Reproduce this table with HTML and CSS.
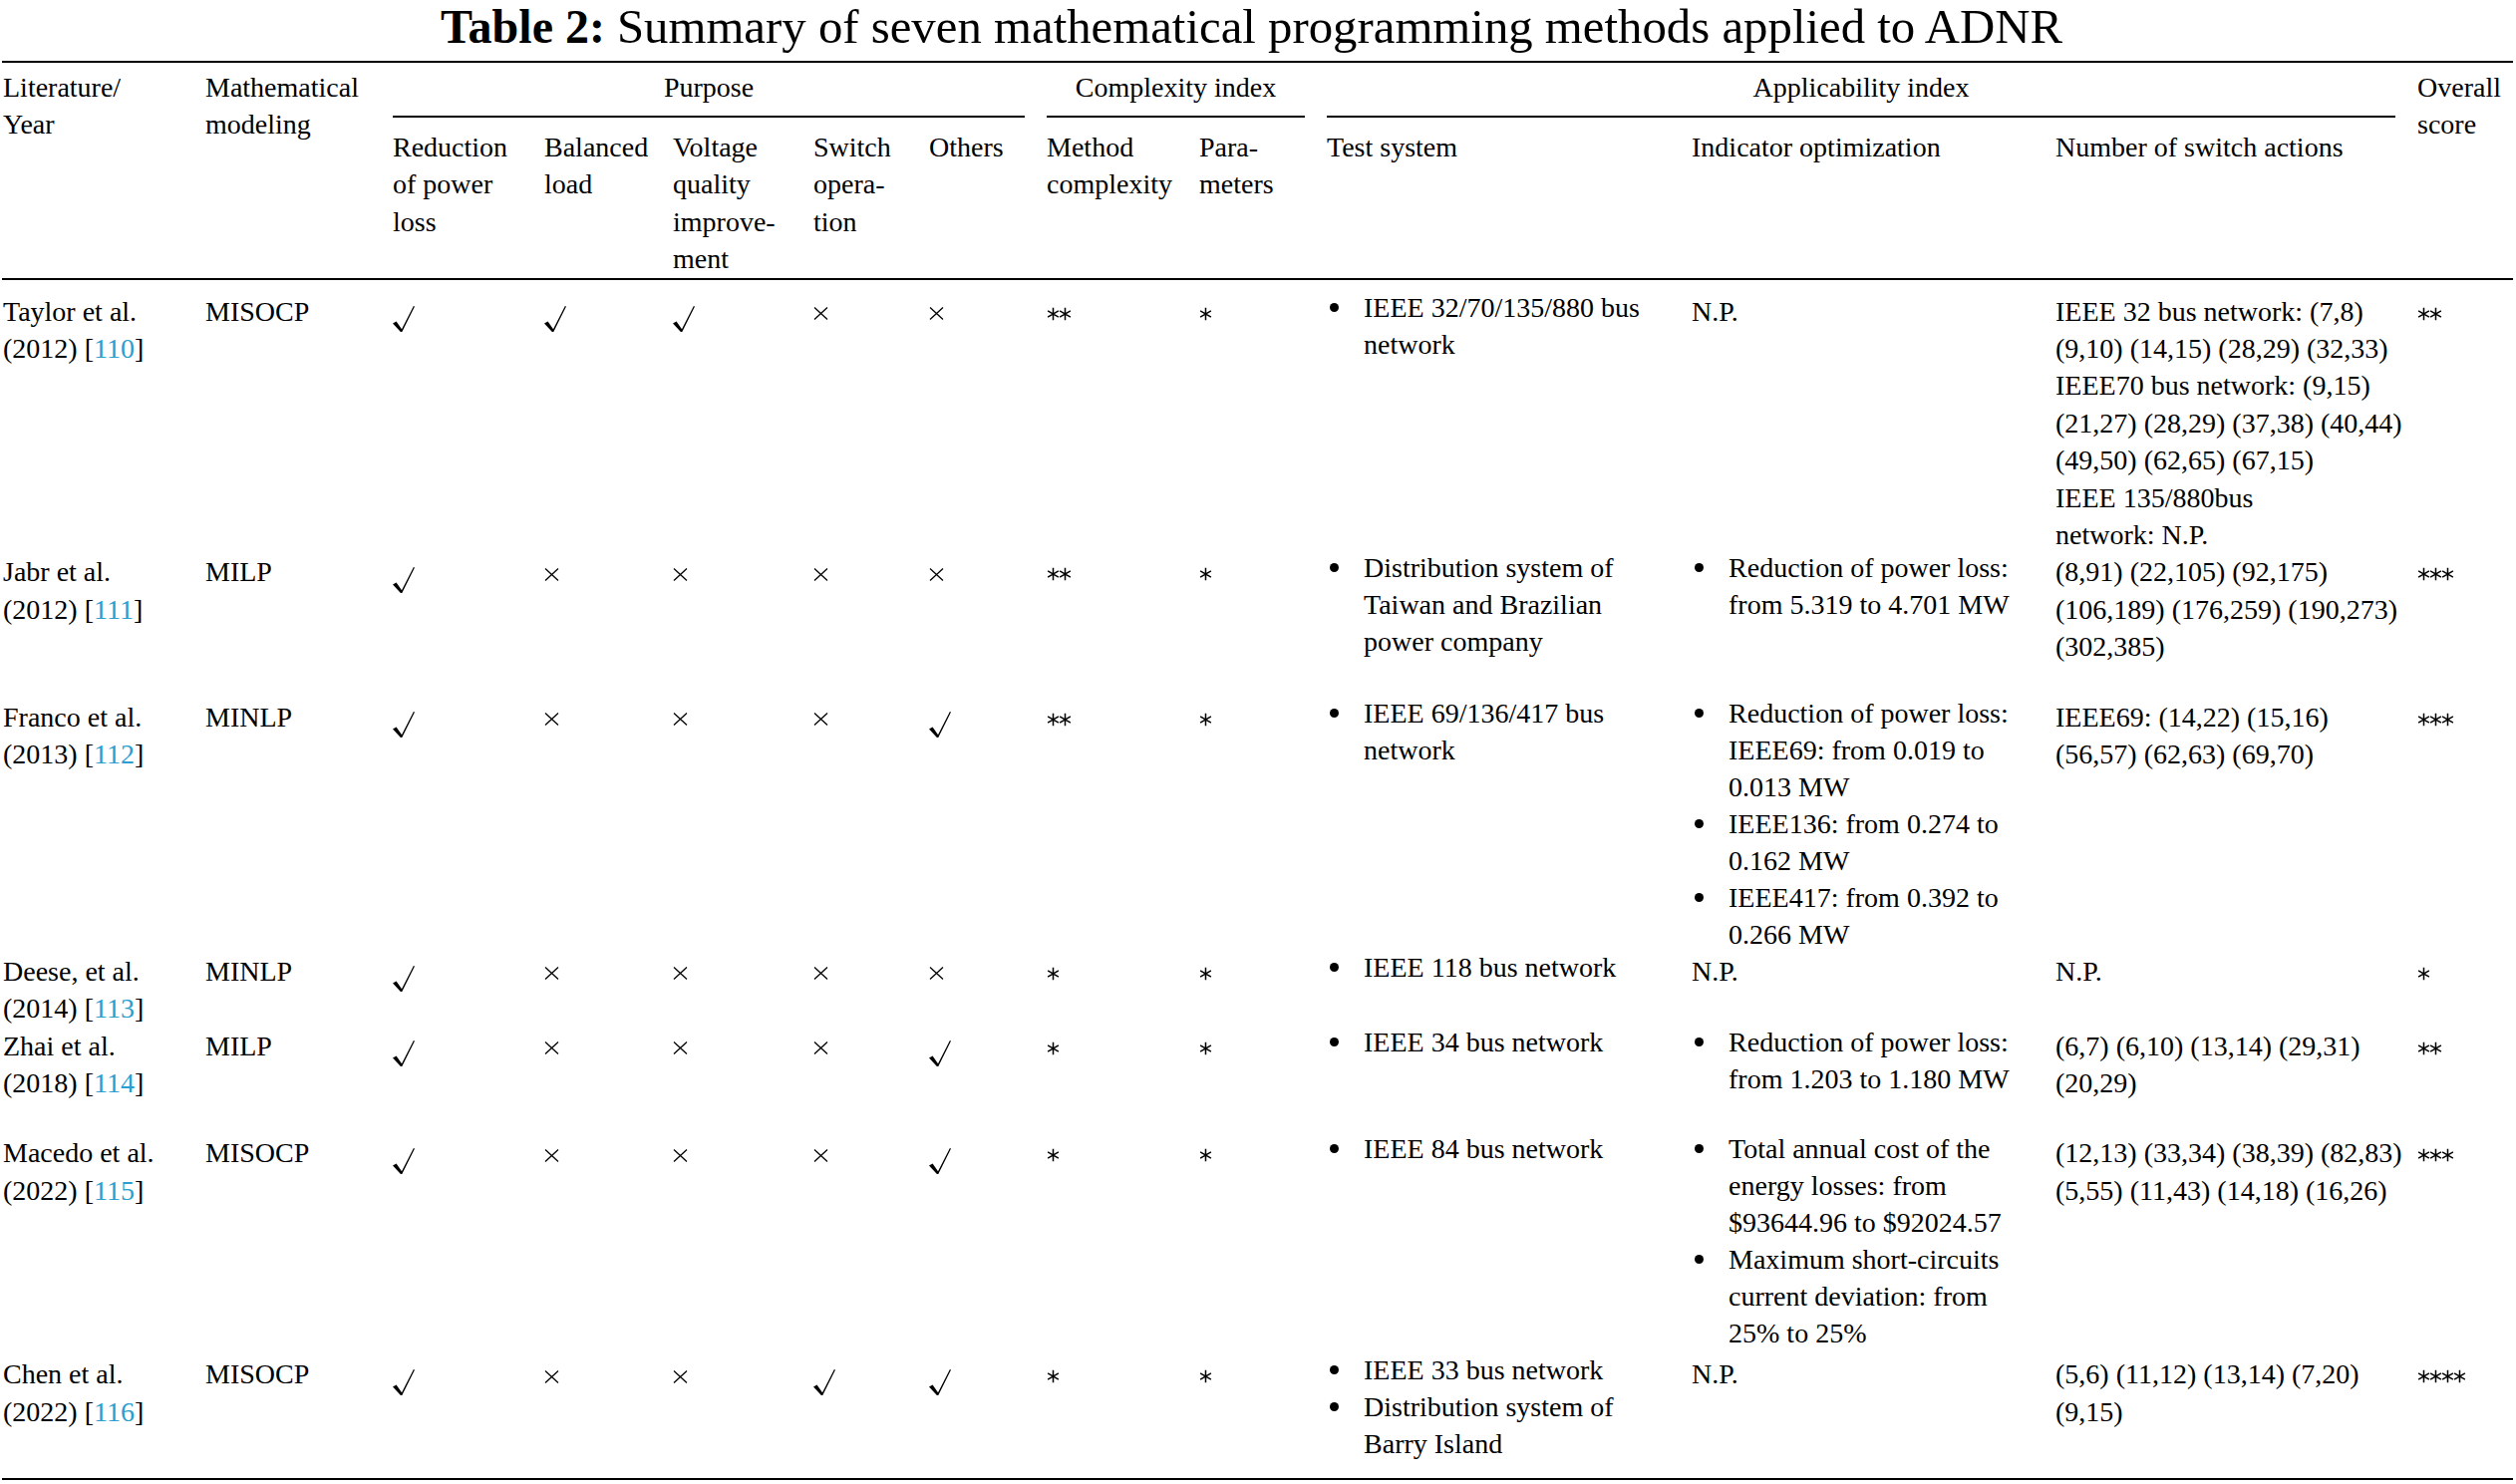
FILE: index.html
```html
<!DOCTYPE html>
<html lang="en">
<head>
<meta charset="utf-8">
<title>Table 2</title>
<link rel="stylesheet" href="styles.css">
</head>
<body>
<div class="page">
  <h1 class="caption"><b>Table 2:</b> <span class="cap-text">Summary of seven mathematical programming methods applied to ADNR</span></h1>
  <div class="tbl-wrap">
  <table class="tbl">
    <colgroup>
      <col class="w1"><col class="w2"><col class="w3"><col class="w4"><col class="w5"><col class="w6"><col class="w7"><col class="w8"><col class="w9"><col class="w10"><col class="w11"><col class="w12"><col class="w13">
    </colgroup>
    <thead>
      <tr class="hr1">
        <th rowspan="2" class="c-first span2">Literature/<br>Year</th>
        <th rowspan="2" class="span2">Mathematical<br>modeling</th>
        <th colspan="5" class="grp"><div class="grp-label">Purpose</div></th>
        <th colspan="2" class="grp"><div class="grp-label">Complexity index</div></th>
        <th colspan="3" class="grp"><div class="grp-label">Applicability index</div></th>
        <th rowspan="2" class="c-last span2">Overall<br>score</th>
      </tr>
      <tr class="hr2">
        <th>Reduction<br>of power<br>loss</th>
        <th>Balanced<br>load</th>
        <th>Voltage<br>quality<br>improve-<br>ment</th>
        <th>Switch<br>opera-<br>tion</th>
        <th>Others</th>
        <th>Method<br>complexity</th>
        <th>Para-<br>meters</th>
        <th>Test system</th>
        <th>Indicator optimization</th>
        <th>Number of switch actions</th>
      </tr>
    </thead>
    <tbody>
      <tr class="r-first">
        <td class="c-first">Taylor et al.<br>(2012) [<a class="ref" href="#">110</a>]</td>
        <td>MISOCP</td>
        <td><svg class="ic-chk" viewBox="0 0 22 26"><path d="M0 17.6L3.6 15.6L9 23.2L20.9 0L22 0.5L9.3 26L7.9 26Z"/></svg></td>
        <td><svg class="ic-chk" viewBox="0 0 22 26"><path d="M0 17.6L3.6 15.6L9 23.2L20.9 0L22 0.5L9.3 26L7.9 26Z"/></svg></td>
        <td><svg class="ic-chk" viewBox="0 0 22 26"><path d="M0 17.6L3.6 15.6L9 23.2L20.9 0L22 0.5L9.3 26L7.9 26Z"/></svg></td>
        <td><svg class="ic-x" viewBox="0 0 15 13"><path d="M1 0.5L14 12.5M14 0.5L1 12.5"/></svg></td>
        <td><svg class="ic-x" viewBox="0 0 15 13"><path d="M1 0.5L14 12.5M14 0.5L1 12.5"/></svg></td>
        <td><div class="stars"><svg viewBox="0 0 13 14"><path d="M6.5 0.8V13.2M1.1 3.9L11.9 10.1M1.1 10.1L11.9 3.9"/></svg><svg viewBox="0 0 13 14"><path d="M6.5 0.8V13.2M1.1 3.9L11.9 10.1M1.1 10.1L11.9 3.9"/></svg></div></td>
        <td><div class="stars"><svg viewBox="0 0 13 14"><path d="M6.5 0.8V13.2M1.1 3.9L11.9 10.1M1.1 10.1L11.9 3.9"/></svg></div></td>
        <td><ul class="bl"><li><span>IEEE 32/70/135/880 bus<br>network</span></li></ul></td>
        <td>N.P.</td>
        <td>IEEE 32 bus network: (7,8)<br>(9,10) (14,15) (28,29) (32,33)<br>IEEE70 bus network: (9,15)<br>(21,27) (28,29) (37,38) (40,44)<br>(49,50) (62,65) (67,15)<br>IEEE 135/880bus<br>network: N.P.</td>
        <td class="c-last"><div class="stars"><svg viewBox="0 0 13 14"><path d="M6.5 0.8V13.2M1.1 3.9L11.9 10.1M1.1 10.1L11.9 3.9"/></svg><svg viewBox="0 0 13 14"><path d="M6.5 0.8V13.2M1.1 3.9L11.9 10.1M1.1 10.1L11.9 3.9"/></svg></div></td>
      </tr>
      <tr class="r-gap">
        <td class="c-first">Jabr et al.<br>(2012) [<a class="ref" href="#">111</a>]</td>
        <td>MILP</td>
        <td><svg class="ic-chk" viewBox="0 0 22 26"><path d="M0 17.6L3.6 15.6L9 23.2L20.9 0L22 0.5L9.3 26L7.9 26Z"/></svg></td>
        <td><svg class="ic-x" viewBox="0 0 15 13"><path d="M1 0.5L14 12.5M14 0.5L1 12.5"/></svg></td>
        <td><svg class="ic-x" viewBox="0 0 15 13"><path d="M1 0.5L14 12.5M14 0.5L1 12.5"/></svg></td>
        <td><svg class="ic-x" viewBox="0 0 15 13"><path d="M1 0.5L14 12.5M14 0.5L1 12.5"/></svg></td>
        <td><svg class="ic-x" viewBox="0 0 15 13"><path d="M1 0.5L14 12.5M14 0.5L1 12.5"/></svg></td>
        <td><div class="stars"><svg viewBox="0 0 13 14"><path d="M6.5 0.8V13.2M1.1 3.9L11.9 10.1M1.1 10.1L11.9 3.9"/></svg><svg viewBox="0 0 13 14"><path d="M6.5 0.8V13.2M1.1 3.9L11.9 10.1M1.1 10.1L11.9 3.9"/></svg></div></td>
        <td><div class="stars"><svg viewBox="0 0 13 14"><path d="M6.5 0.8V13.2M1.1 3.9L11.9 10.1M1.1 10.1L11.9 3.9"/></svg></div></td>
        <td><ul class="bl"><li><span>Distribution system of<br>Taiwan and Brazilian<br>power company</span></li></ul></td>
        <td><ul class="bl"><li><span>Reduction of power loss:<br>from 5.319 to 4.701 MW</span></li></ul></td>
        <td>(8,91) (22,105) (92,175)<br>(106,189) (176,259) (190,273)<br>(302,385)</td>
        <td class="c-last"><div class="stars"><svg viewBox="0 0 13 14"><path d="M6.5 0.8V13.2M1.1 3.9L11.9 10.1M1.1 10.1L11.9 3.9"/></svg><svg viewBox="0 0 13 14"><path d="M6.5 0.8V13.2M1.1 3.9L11.9 10.1M1.1 10.1L11.9 3.9"/></svg><svg viewBox="0 0 13 14"><path d="M6.5 0.8V13.2M1.1 3.9L11.9 10.1M1.1 10.1L11.9 3.9"/></svg></div></td>
      </tr>
      <tr>
        <td class="c-first">Franco et al.<br>(2013) [<a class="ref" href="#">112</a>]</td>
        <td>MINLP</td>
        <td><svg class="ic-chk" viewBox="0 0 22 26"><path d="M0 17.6L3.6 15.6L9 23.2L20.9 0L22 0.5L9.3 26L7.9 26Z"/></svg></td>
        <td><svg class="ic-x" viewBox="0 0 15 13"><path d="M1 0.5L14 12.5M14 0.5L1 12.5"/></svg></td>
        <td><svg class="ic-x" viewBox="0 0 15 13"><path d="M1 0.5L14 12.5M14 0.5L1 12.5"/></svg></td>
        <td><svg class="ic-x" viewBox="0 0 15 13"><path d="M1 0.5L14 12.5M14 0.5L1 12.5"/></svg></td>
        <td><svg class="ic-chk" viewBox="0 0 22 26"><path d="M0 17.6L3.6 15.6L9 23.2L20.9 0L22 0.5L9.3 26L7.9 26Z"/></svg></td>
        <td><div class="stars"><svg viewBox="0 0 13 14"><path d="M6.5 0.8V13.2M1.1 3.9L11.9 10.1M1.1 10.1L11.9 3.9"/></svg><svg viewBox="0 0 13 14"><path d="M6.5 0.8V13.2M1.1 3.9L11.9 10.1M1.1 10.1L11.9 3.9"/></svg></div></td>
        <td><div class="stars"><svg viewBox="0 0 13 14"><path d="M6.5 0.8V13.2M1.1 3.9L11.9 10.1M1.1 10.1L11.9 3.9"/></svg></div></td>
        <td><ul class="bl"><li><span>IEEE 69/136/417 bus<br>network</span></li></ul></td>
        <td><ul class="bl"><li><span>Reduction of power loss:<br>IEEE69: from 0.019 to<br>0.013 MW</span></li><li><span>IEEE136: from 0.274 to<br>0.162 MW</span></li><li><span>IEEE417: from 0.392 to<br>0.266 MW</span></li></ul></td>
        <td>IEEE69: (14,22) (15,16)<br>(56,57) (62,63) (69,70)</td>
        <td class="c-last"><div class="stars"><svg viewBox="0 0 13 14"><path d="M6.5 0.8V13.2M1.1 3.9L11.9 10.1M1.1 10.1L11.9 3.9"/></svg><svg viewBox="0 0 13 14"><path d="M6.5 0.8V13.2M1.1 3.9L11.9 10.1M1.1 10.1L11.9 3.9"/></svg><svg viewBox="0 0 13 14"><path d="M6.5 0.8V13.2M1.1 3.9L11.9 10.1M1.1 10.1L11.9 3.9"/></svg></div></td>
      </tr>
      <tr>
        <td class="c-first">Deese, et al.<br>(2014) [<a class="ref" href="#">113</a>]</td>
        <td>MINLP</td>
        <td><svg class="ic-chk" viewBox="0 0 22 26"><path d="M0 17.6L3.6 15.6L9 23.2L20.9 0L22 0.5L9.3 26L7.9 26Z"/></svg></td>
        <td><svg class="ic-x" viewBox="0 0 15 13"><path d="M1 0.5L14 12.5M14 0.5L1 12.5"/></svg></td>
        <td><svg class="ic-x" viewBox="0 0 15 13"><path d="M1 0.5L14 12.5M14 0.5L1 12.5"/></svg></td>
        <td><svg class="ic-x" viewBox="0 0 15 13"><path d="M1 0.5L14 12.5M14 0.5L1 12.5"/></svg></td>
        <td><svg class="ic-x" viewBox="0 0 15 13"><path d="M1 0.5L14 12.5M14 0.5L1 12.5"/></svg></td>
        <td><div class="stars"><svg viewBox="0 0 13 14"><path d="M6.5 0.8V13.2M1.1 3.9L11.9 10.1M1.1 10.1L11.9 3.9"/></svg></div></td>
        <td><div class="stars"><svg viewBox="0 0 13 14"><path d="M6.5 0.8V13.2M1.1 3.9L11.9 10.1M1.1 10.1L11.9 3.9"/></svg></div></td>
        <td><ul class="bl"><li><span>IEEE 118 bus network</span></li></ul></td>
        <td>N.P.</td>
        <td>N.P.</td>
        <td class="c-last"><div class="stars"><svg viewBox="0 0 13 14"><path d="M6.5 0.8V13.2M1.1 3.9L11.9 10.1M1.1 10.1L11.9 3.9"/></svg></div></td>
      </tr>
      <tr class="r-gap">
        <td class="c-first">Zhai et al.<br>(2018) [<a class="ref" href="#">114</a>]</td>
        <td>MILP</td>
        <td><svg class="ic-chk" viewBox="0 0 22 26"><path d="M0 17.6L3.6 15.6L9 23.2L20.9 0L22 0.5L9.3 26L7.9 26Z"/></svg></td>
        <td><svg class="ic-x" viewBox="0 0 15 13"><path d="M1 0.5L14 12.5M14 0.5L1 12.5"/></svg></td>
        <td><svg class="ic-x" viewBox="0 0 15 13"><path d="M1 0.5L14 12.5M14 0.5L1 12.5"/></svg></td>
        <td><svg class="ic-x" viewBox="0 0 15 13"><path d="M1 0.5L14 12.5M14 0.5L1 12.5"/></svg></td>
        <td><svg class="ic-chk" viewBox="0 0 22 26"><path d="M0 17.6L3.6 15.6L9 23.2L20.9 0L22 0.5L9.3 26L7.9 26Z"/></svg></td>
        <td><div class="stars"><svg viewBox="0 0 13 14"><path d="M6.5 0.8V13.2M1.1 3.9L11.9 10.1M1.1 10.1L11.9 3.9"/></svg></div></td>
        <td><div class="stars"><svg viewBox="0 0 13 14"><path d="M6.5 0.8V13.2M1.1 3.9L11.9 10.1M1.1 10.1L11.9 3.9"/></svg></div></td>
        <td><ul class="bl"><li><span>IEEE 34 bus network</span></li></ul></td>
        <td><ul class="bl"><li><span>Reduction of power loss:<br>from 1.203 to 1.180 MW</span></li></ul></td>
        <td>(6,7) (6,10) (13,14) (29,31)<br>(20,29)</td>
        <td class="c-last"><div class="stars"><svg viewBox="0 0 13 14"><path d="M6.5 0.8V13.2M1.1 3.9L11.9 10.1M1.1 10.1L11.9 3.9"/></svg><svg viewBox="0 0 13 14"><path d="M6.5 0.8V13.2M1.1 3.9L11.9 10.1M1.1 10.1L11.9 3.9"/></svg></div></td>
      </tr>
      <tr class="r-small">
        <td class="c-first">Macedo et al.<br>(2022) [<a class="ref" href="#">115</a>]</td>
        <td>MISOCP</td>
        <td><svg class="ic-chk" viewBox="0 0 22 26"><path d="M0 17.6L3.6 15.6L9 23.2L20.9 0L22 0.5L9.3 26L7.9 26Z"/></svg></td>
        <td><svg class="ic-x" viewBox="0 0 15 13"><path d="M1 0.5L14 12.5M14 0.5L1 12.5"/></svg></td>
        <td><svg class="ic-x" viewBox="0 0 15 13"><path d="M1 0.5L14 12.5M14 0.5L1 12.5"/></svg></td>
        <td><svg class="ic-x" viewBox="0 0 15 13"><path d="M1 0.5L14 12.5M14 0.5L1 12.5"/></svg></td>
        <td><svg class="ic-chk" viewBox="0 0 22 26"><path d="M0 17.6L3.6 15.6L9 23.2L20.9 0L22 0.5L9.3 26L7.9 26Z"/></svg></td>
        <td><div class="stars"><svg viewBox="0 0 13 14"><path d="M6.5 0.8V13.2M1.1 3.9L11.9 10.1M1.1 10.1L11.9 3.9"/></svg></div></td>
        <td><div class="stars"><svg viewBox="0 0 13 14"><path d="M6.5 0.8V13.2M1.1 3.9L11.9 10.1M1.1 10.1L11.9 3.9"/></svg></div></td>
        <td><ul class="bl"><li><span>IEEE 84 bus network</span></li></ul></td>
        <td><ul class="bl"><li><span>Total annual cost of the<br>energy losses: from<br>$93644.96 to $92024.57</span></li><li><span>Maximum short-circuits<br>current deviation: from<br>25% to 25%</span></li></ul></td>
        <td>(12,13) (33,34) (38,39) (82,83)<br>(5,55) (11,43) (14,18) (16,26)</td>
        <td class="c-last"><div class="stars"><svg viewBox="0 0 13 14"><path d="M6.5 0.8V13.2M1.1 3.9L11.9 10.1M1.1 10.1L11.9 3.9"/></svg><svg viewBox="0 0 13 14"><path d="M6.5 0.8V13.2M1.1 3.9L11.9 10.1M1.1 10.1L11.9 3.9"/></svg><svg viewBox="0 0 13 14"><path d="M6.5 0.8V13.2M1.1 3.9L11.9 10.1M1.1 10.1L11.9 3.9"/></svg></div></td>
      </tr>
      <tr class="r-last">
        <td class="c-first">Chen et al.<br>(2022) [<a class="ref" href="#">116</a>]</td>
        <td>MISOCP</td>
        <td><svg class="ic-chk" viewBox="0 0 22 26"><path d="M0 17.6L3.6 15.6L9 23.2L20.9 0L22 0.5L9.3 26L7.9 26Z"/></svg></td>
        <td><svg class="ic-x" viewBox="0 0 15 13"><path d="M1 0.5L14 12.5M14 0.5L1 12.5"/></svg></td>
        <td><svg class="ic-x" viewBox="0 0 15 13"><path d="M1 0.5L14 12.5M14 0.5L1 12.5"/></svg></td>
        <td><svg class="ic-chk" viewBox="0 0 22 26"><path d="M0 17.6L3.6 15.6L9 23.2L20.9 0L22 0.5L9.3 26L7.9 26Z"/></svg></td>
        <td><svg class="ic-chk" viewBox="0 0 22 26"><path d="M0 17.6L3.6 15.6L9 23.2L20.9 0L22 0.5L9.3 26L7.9 26Z"/></svg></td>
        <td><div class="stars"><svg viewBox="0 0 13 14"><path d="M6.5 0.8V13.2M1.1 3.9L11.9 10.1M1.1 10.1L11.9 3.9"/></svg></div></td>
        <td><div class="stars"><svg viewBox="0 0 13 14"><path d="M6.5 0.8V13.2M1.1 3.9L11.9 10.1M1.1 10.1L11.9 3.9"/></svg></div></td>
        <td><ul class="bl"><li><span>IEEE 33 bus network</span></li><li><span>Distribution system of<br>Barry Island</span></li></ul></td>
        <td>N.P.</td>
        <td>(5,6) (11,12) (13,14) (7,20)<br>(9,15)</td>
        <td class="c-last"><div class="stars"><svg viewBox="0 0 13 14"><path d="M6.5 0.8V13.2M1.1 3.9L11.9 10.1M1.1 10.1L11.9 3.9"/></svg><svg viewBox="0 0 13 14"><path d="M6.5 0.8V13.2M1.1 3.9L11.9 10.1M1.1 10.1L11.9 3.9"/></svg><svg viewBox="0 0 13 14"><path d="M6.5 0.8V13.2M1.1 3.9L11.9 10.1M1.1 10.1L11.9 3.9"/></svg><svg viewBox="0 0 13 14"><path d="M6.5 0.8V13.2M1.1 3.9L11.9 10.1M1.1 10.1L11.9 3.9"/></svg></div></td>
      </tr>
    </tbody>
  </table>
  </div>
</div>
</body>
</html>
```
FILE: styles.css
```css
html, body {
  margin: 0;
  padding: 0;
  background: #ffffff;
}

body {
  color: #000000;
  font-family: "Liberation Serif", "Times New Roman", serif;
}

.page {
  width: 2524px;
}

.caption {
  margin: 0;
  padding-right: 13px;
  font-size: 48px;
  line-height: 54px;
  font-weight: normal;
  text-align: center;
  white-space: nowrap;
}

.caption b {
  font-weight: bold;
}

.cap-text {
  font-size: 48.8px;
}

.tbl-wrap {
  margin: 7px 0 0 2px;
  width: 2519px;
  border-top: 2px solid #000;
  border-bottom: 2px solid #000;
}

.tbl {
  border-collapse: separate;
  border-spacing: 0;
  table-layout: fixed;
  width: 2519px;
  font-size: 28px;
  line-height: 37.4px;
}

.w1 { width: 193px; }
.w2 { width: 188px; }
.w3 { width: 152px; }
.w4 { width: 129px; }
.w5 { width: 141px; }
.w6 { width: 116px; }
.w7 { width: 118px; }
.w8 { width: 153px; }
.w9 { width: 128px; }
.w10 { width: 366px; }
.w11 { width: 365px; }
.w12 { width: 363px; }
.w13 { width: 107px; }

.tbl th,
.tbl td {
  padding: 0 11px;
  text-align: left;
  vertical-align: top;
  font-weight: normal;
  white-space: nowrap;
}

.tbl .c-first {
  padding-left: 1px;
}

.tbl .c-last {
  padding-right: 0;
}

/* header */
.hr1 th {
  padding-top: 6px;
}

.hr1 th.span2 {
  border-bottom: 2px solid #000;
}

.hr1 th.grp {
  text-align: center;
}

.grp-label {
  padding-bottom: 10px;
  border-bottom: 2px solid #000;
}

.hr2 th {
  padding-top: 10.6px;
  border-bottom: 2px solid #000;
}

/* body rows */
.r-first td {
  padding-top: 13px;
}

.r-gap td {
  padding-bottom: 33px;
}

.r-small td {
  padding-bottom: 4px;
}

.r-last td {
  padding-bottom: 16px;
}

.ref {
  color: #2a9ed0;
  text-decoration: none;
}

/* bullet lists */
.bl {
  list-style: none;
  margin: -4px 0 0;
  padding: 0;
  line-height: 37px;
}

.bl li {
  display: flex;
}

.bl li::before {
  content: "";
  flex: 0 0 9px;
  height: 9px;
  border-radius: 50%;
  background: #000;
  margin: 14px 25px 0 3px;
}

/* symbols */
.ic-chk {
  display: block;
  width: 22px;
  height: 26px;
  margin-top: 13.4px;
  fill: #000;
}

.ic-x {
  display: block;
  width: 15px;
  height: 13px;
  margin-top: 14.4px;
  fill: none;
  stroke: #000;
  stroke-width: 1.3;
}

.stars {
  display: flex;
  margin-top: 14px;
}

.stars svg {
  display: block;
  flex: 0 0 13px;
  width: 13px;
  height: 14px;
  margin-right: -1px;
  fill: none;
  stroke: #000;
  stroke-width: 1.5;
}
```
